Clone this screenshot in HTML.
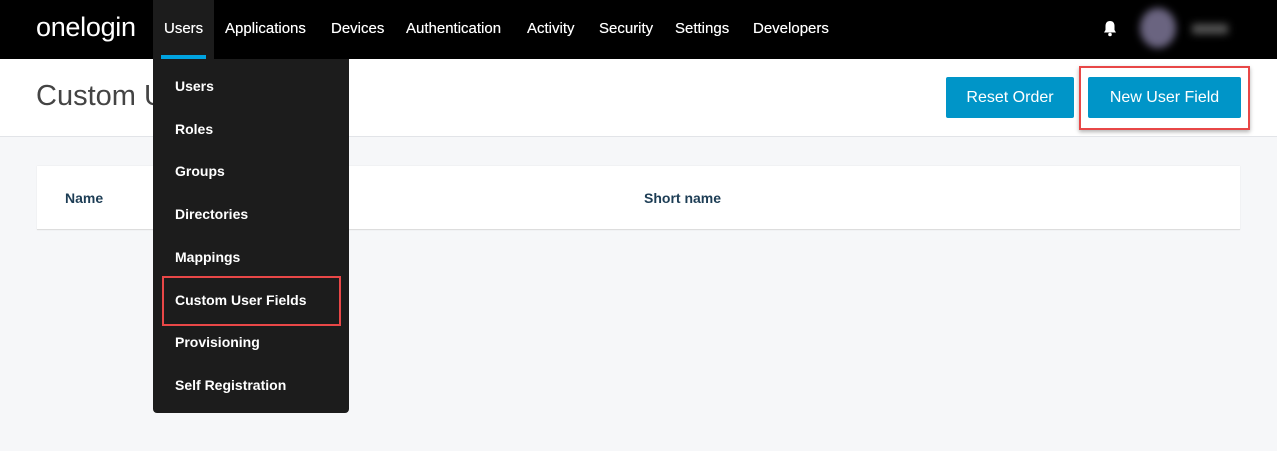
<!DOCTYPE html>
<html><head><style>
*{margin:0;padding:0;box-sizing:border-box}
body{width:1277px;height:451px;overflow:hidden;background:#f6f7f9;font-family:"Liberation Sans",Arial,sans-serif;position:relative}
.nav{position:absolute;left:0;top:0;width:1277px;height:59px;background:#000}
.logo{position:absolute;left:36px;top:12px;color:#fff;font-size:27px;letter-spacing:-0.3px}
.ni{position:absolute;top:20px;color:#fff;font-size:15px;text-shadow:0 0 0.4px #fff}
.uact{position:absolute;left:153px;top:0;width:61px;height:59px;background:#1c1c1c}
.uline{position:absolute;left:161px;top:55px;width:45px;height:4px;background:#00a3e0}
.head{position:absolute;left:0;top:59px;width:1277px;height:78px;background:#fff;border-bottom:1px solid #e2e4e8}
.title{position:absolute;left:36px;top:80px;font-size:29px;color:#444}
.btn{position:absolute;top:77px;height:41px;background:#0095c8;color:#fff;font-size:16px;border-radius:2px;text-align:center;line-height:41px}
.card{position:absolute;left:37px;top:166px;width:1203px;height:64px;background:#fff;border-bottom:1px solid #ddd;box-shadow:0 0 1px #ddd}
.th{position:absolute;top:190px;font-size:14px;font-weight:bold;color:#1d3d55}
.menu{position:absolute;left:153px;top:59px;width:196px;height:354px;background:#1c1c1c;border-radius:0 0 4px 4px}
.mi{position:absolute;left:175px;color:#fff;font-size:14px;font-weight:bold}
.red{position:absolute;border:2px solid #e84747}
</style></head><body>
<div class="nav"></div>
<div class="logo">onelogin</div>
<div class="uact"></div><div class="uline"></div>
<div class="ni" style="left:164px">Users</div>
<div class="ni" style="left:225px">Applications</div>
<div class="ni" style="left:331px">Devices</div>
<div class="ni" style="left:406px">Authentication</div>
<div class="ni" style="left:527px">Activity</div>
<div class="ni" style="left:599px">Security</div>
<div class="ni" style="left:675px">Settings</div>
<div class="ni" style="left:753px">Developers</div>
<svg style="position:absolute;left:1102px;top:20px" width="16" height="17" viewBox="0 0 16 17"><path d="M8 1c-3 0-4.5 2-4.5 5v4L2 12.5h12L12.5 10V6C12.5 3 11 1 8 1z" fill="#fff"/><circle cx="8" cy="14.5" r="1.8" fill="#fff"/></svg>
<div style="position:absolute;left:1140px;top:8px;width:36px;height:40px;border-radius:50%;background:#6a6480;filter:blur(4px)"></div>
<div style="position:absolute;left:1192px;top:24px;width:36px;height:10px;background:#555;filter:blur(4px)"></div>
<div class="head"></div>
<div class="title">Custom User Fields</div>
<div class="btn" style="left:946px;width:128px">Reset Order</div>
<div class="red" style="left:1079px;top:66px;width:171px;height:64px;box-shadow:0 2px 4px rgba(0,0,0,.3)"></div>
<div class="btn" style="left:1088px;width:153px">New User Field</div>
<div class="card"></div>
<div class="th" style="left:65px">Name</div>
<div class="th" style="left:644px">Short name</div>
<div class="menu"></div>
<div class="mi" style="top:78px">Users</div>
<div class="mi" style="top:121px">Roles</div>
<div class="mi" style="top:163px">Groups</div>
<div class="mi" style="top:206px">Directories</div>
<div class="mi" style="top:249px">Mappings</div>
<div class="mi" style="top:292px">Custom User Fields</div>
<div class="mi" style="top:334px">Provisioning</div>
<div class="mi" style="top:377px">Self Registration</div>
<div class="red" style="left:162px;top:276px;width:179px;height:50px"></div>
</body></html>
